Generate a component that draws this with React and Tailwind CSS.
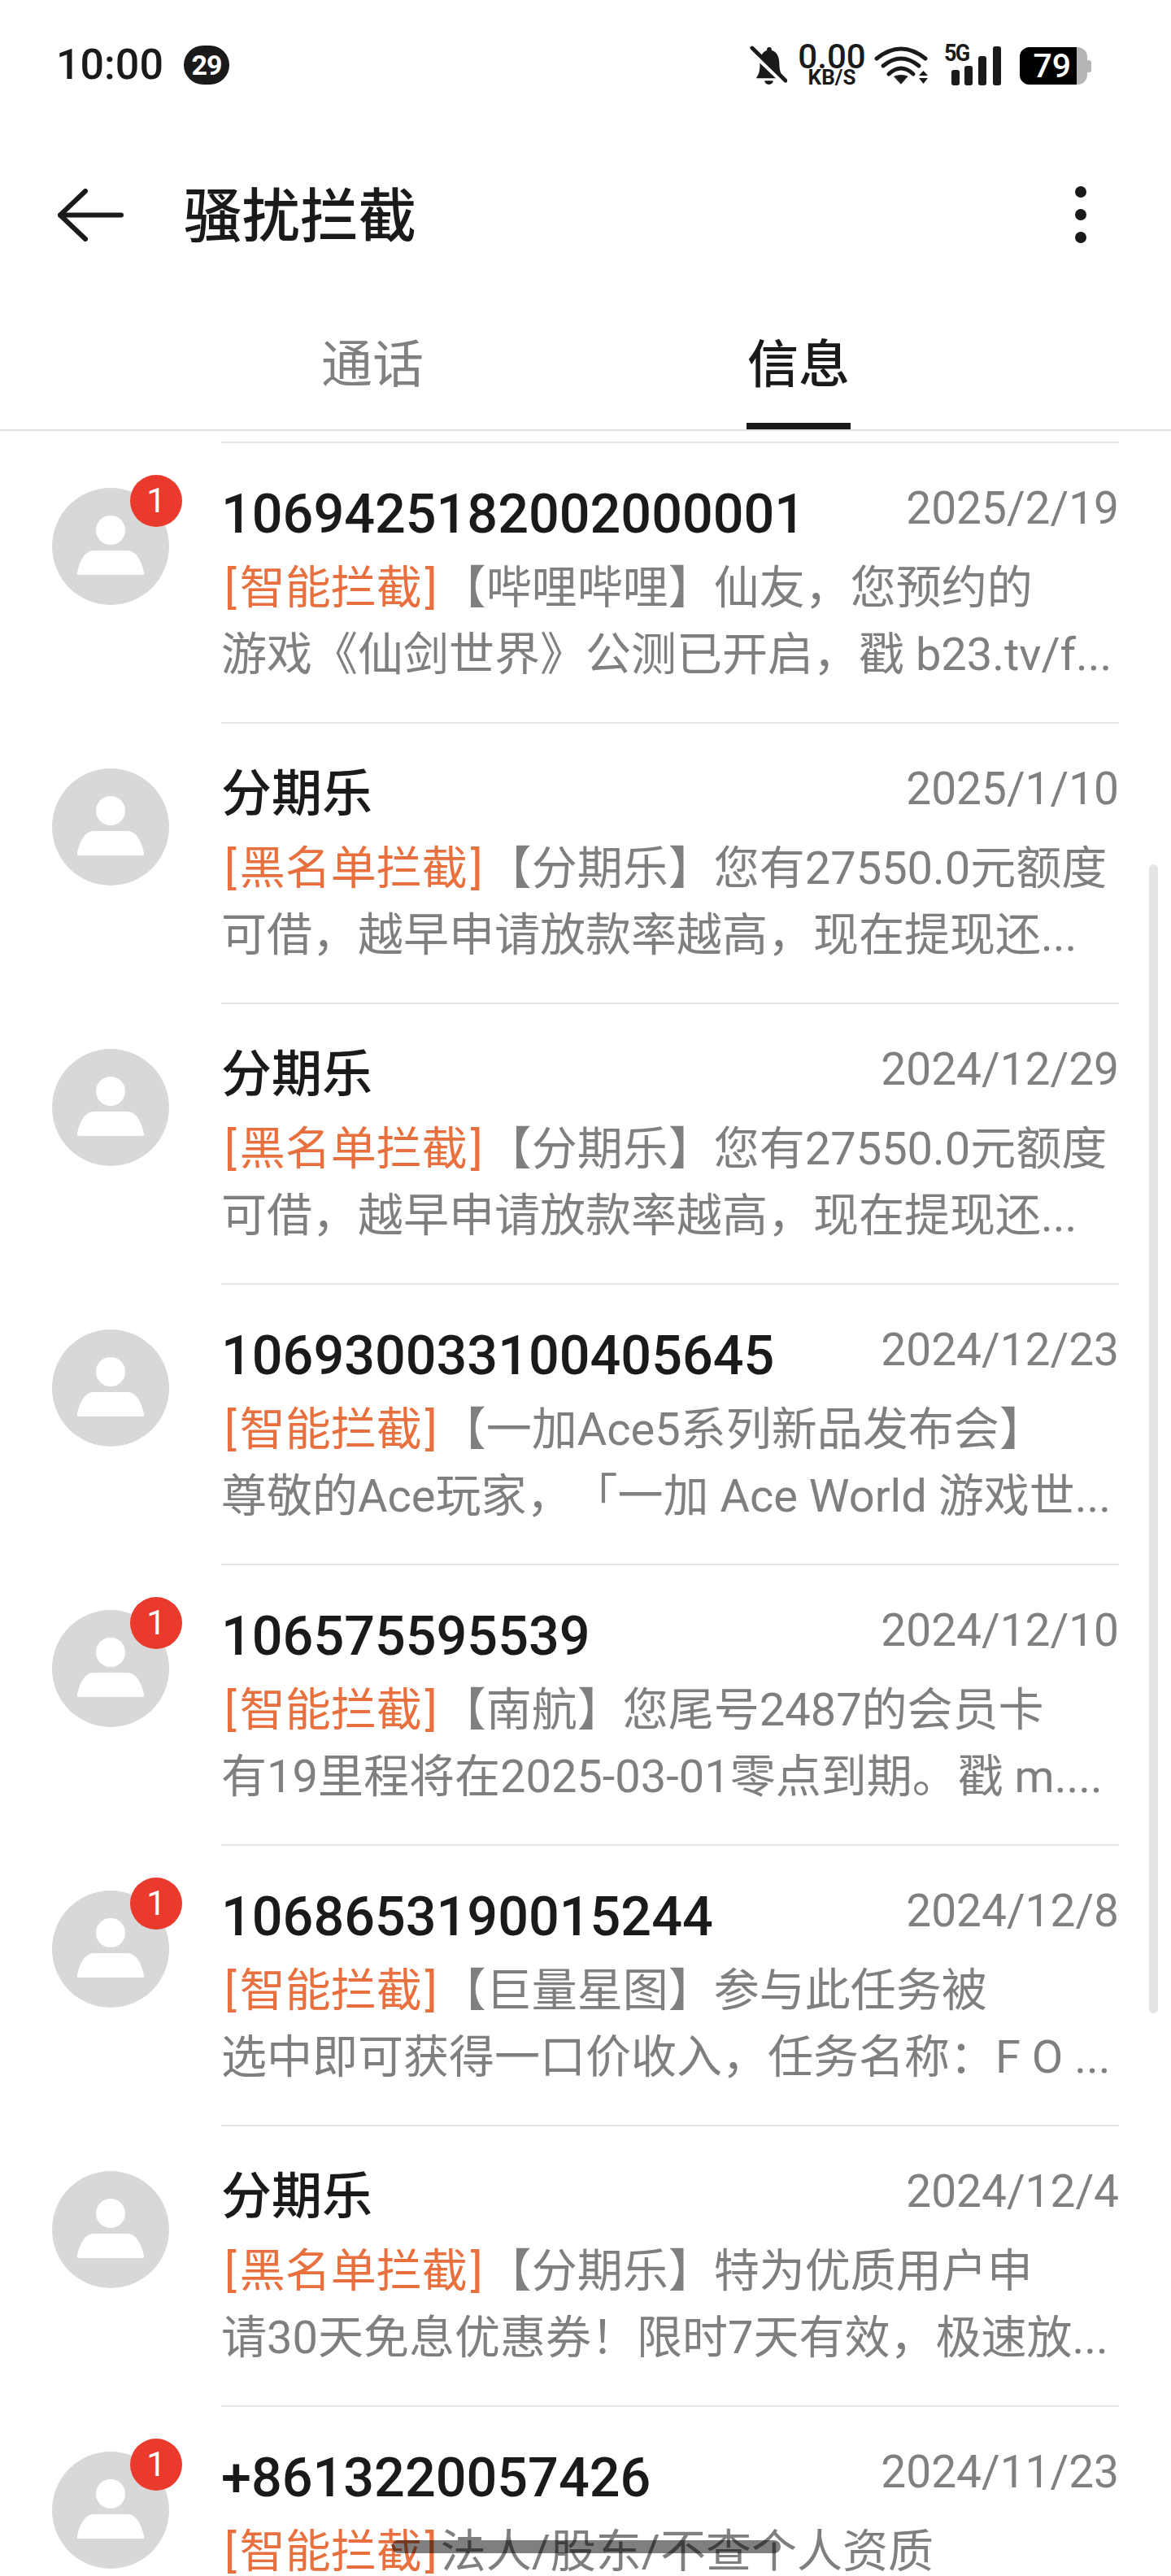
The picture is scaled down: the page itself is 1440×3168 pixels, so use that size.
import React from 'react';

const FONT = "font-['Roboto','Noto_Sans_CJK_SC',sans-serif]";

const rows = [
  { name: '1069425182002000001', date: '2025/2/19', tag: '智能拦截', line1: '【哔哩哔哩】仙友，您预约的', line2: '游戏《仙剑世界》公测已开启，戳 b23.tv/f...', badge: true },
  { name: '分期乐', cjk: true, date: '2025/1/10', tag: '黑名单拦截', line1: '【分期乐】您有27550.0元额度', line2: '可借，越早申请放款率越高，现在提现还...' },
  { name: '分期乐', cjk: true, date: '2024/12/29', tag: '黑名单拦截', line1: '【分期乐】您有27550.0元额度', line2: '可借，越早申请放款率越高，现在提现还...' },
  { name: '106930033100405645', date: '2024/12/23', tag: '智能拦截', line1: '【一加Ace5系列新品发布会】', line2: '尊敬的Ace玩家，「一加 Ace World 游戏世...' },
  { name: '106575595539', date: '2024/12/10', tag: '智能拦截', line1: '【南航】您尾号2487的会员卡', line2: '有19里程将在2025-03-01零点到期。戳 m....', badge: true },
  { name: '1068653190015244', date: '2024/12/8', tag: '智能拦截', line1: '【巨量星图】参与此任务被', line2: '选中即可获得一口价收入，任务名称：F O ...', badge: true },
  { name: '分期乐', cjk: true, date: '2024/12/4', tag: '黑名单拦截', line1: '【分期乐】特为优质用户申', line2: '请30天免息优惠券！限时7天有效，极速放...' },
  { name: '+8613220057426', date: '2024/11/23', tag: '智能拦截', line1: '法人/股东/不查个人资质', line2: '', badge: true },
];

function BellOff() {
  return (
    <svg width="48" height="50" viewBox="0 0 48 50" fill="#1a1a1a">
      <path d="M25 2a3 3 0 0 1 3 3v1C35 8 38 15 38 24C38 32 40 37 44 42H8C12 37 13 32 13 24C13 15 16 8 22 6V5a3 3 0 0 1 3-3Z" />
      <path d="M19 45h11a5.500 5 0 0 1-11 0Z" />
      <path d="M-1 5L44 48" stroke="#fff" strokeWidth="6" />
      <path d="M3 3L46 45" stroke="#1a1a1a" strokeWidth="5" strokeLinecap="round" />
    </svg>
  );
}

function Wifi() {
  return (
    <svg width="68" height="50" viewBox="0 0 68 50" fill="none" stroke="#1a1a1a" strokeWidth="5" strokeLinecap="round">
      <path d="M3 17Q33 -7 63 17" />
      <path d="M11 26Q33 8 55 26" />
      <path d="M18 36Q33 22 48 36" />
      <path d="M25 39Q33 36 41 39L33 48Z" fill="#1a1a1a" stroke="#1a1a1a" strokeWidth="1" strokeLinejoin="round" />
      <path d="M55 38H66L60.500 32Z" fill="#1a1a1a" stroke="none" />
      <path d="M55 41H66L60.500 48Z" fill="#1a1a1a" stroke="none" />
    </svg>
  );
}

function Signal() {
  return (
    <div className="relative w-[70px] h-[50px]">
      <span className="absolute left-0 -top-[5px] text-[30px] leading-[30px] font-bold tracking-[-2px] text-[#1a1a1a] scale-x-90 origin-left">5G</span>
      <svg width="70" height="50" viewBox="0 0 70 50" fill="#1a1a1a">
        <rect x="9" y="31" width="10" height="19" rx="3" />
        <rect x="25" y="26" width="10" height="24" rx="3" />
        <rect x="42" y="14" width="10" height="36" rx="3" />
        <rect x="60" y="2" width="10" height="48" rx="3" />
      </svg>
    </div>
  );
}

function Battery() {
  return (
    <div className="flex items-center">
      <div className="w-[83px] h-[46px] rounded-[12px] overflow-hidden bg-[#b5b5b5]">
        <div className="w-[70px] h-full bg-black text-white text-[41px] leading-[46px] font-medium text-right pr-[7px]">79</div>
      </div>
      <div className="w-[5px] h-[15px] rounded-r-[3px] bg-[#b5b5b5]" />
    </div>
  );
}

function StatusBar() {
  return (
    <div className="h-[204px] flex items-start justify-between pl-[69px] pr-[98px] pt-[55px]">
      <div className="flex items-center h-[50px] gap-[25px]">
        <span className="text-[52px] leading-[50px] font-medium text-[#1a1a1a]">10:00</span>
        <span className="w-[56px] h-[48px] rounded-[24px] bg-[#1a1a1a] text-white text-[34px] leading-[48px] font-bold text-center tracking-[-1px]">29</span>
      </div>
      <div className="flex items-start w-[420px]">
        <BellOff />
        <div className="w-[80px] ml-[15px] flex flex-col items-center text-[#1a1a1a]">
          <span className="text-[42px] leading-[30px] font-medium">0.00</span>
          <span className="text-[26px] leading-[18px] font-bold mt-[1px]">KB/S</span>
        </div>
        <div className="ml-[12px]"><Wifi /></div>
        <div className="ml-[18px]"><Signal /></div>
        <div className="ml-[23px] mt-[3px]"><Battery /></div>
      </div>
    </div>
  );
}

function TitleBar() {
  return (
    <div className="h-[120px] flex items-center justify-between pl-[71px] pr-[104px]">
      <div className="flex items-center">
        <svg width="81" height="65" viewBox="0 0 81 65" fill="none" stroke="#1a1a1a" strokeWidth="6" strokeLinecap="round" strokeLinejoin="round">
          <path d="M34 3L3 32.500L34 62" />
          <path d="M3 32.500H78" />
        </svg>
        <h1 className="ml-[74px] pt-[5px] text-[71.500px] leading-[90px] font-medium text-[#1a1a1a]">骚扰拦截</h1>
      </div>
      <div className="flex flex-col gap-[14px]">
        <span className="w-[14px] h-[14px] rounded-full bg-[#1a1a1a]" />
        <span className="w-[14px] h-[14px] rounded-full bg-[#1a1a1a]" />
        <span className="w-[14px] h-[14px] rounded-full bg-[#1a1a1a]" />
      </div>
    </div>
  );
}

function Tabs() {
  return (
    <div className="h-[206px] border-b-2 border-[#e2e2e2] px-[196px] grid grid-cols-2">
      <div className="flex flex-col items-center pt-[80px]">
        <span className="text-[63px] leading-[90px] text-[#808080]">通话</span>
      </div>
      <div className="flex flex-col items-center pt-[80px]">
        <span className="text-[63px] leading-[90px] font-medium text-[#1a1a1a]">信息</span>
        <span className="w-[128px] h-[8px] mt-[26px] bg-[#1a1a1a]" />
      </div>
    </div>
  );
}

function Avatar({ badge }) {
  return (
    <div className="relative w-[144px] h-[144px] rounded-full bg-[#d8d8d8]">
      <svg className="w-full h-full" viewBox="0 0 144 144" fill="#fff">
        <circle cx="72" cy="52" r="18" />
        <path d="M52 77H92C104 77 110 90 113 104Q114 107 111 107H33Q30 107 31 104C34 90 40 77 52 77Z" />
      </svg>
      {badge && (
        <span className="absolute left-[96px] -top-[16px] w-[64px] h-[64px] rounded-full bg-[#ea3a2e] text-white text-[42px] leading-[64px] text-center">1</span>
      )}
    </div>
  );
}

function Row({ row }) {
  return (
    <div className="flex h-[345px]">
      <div className="w-[272px] shrink-0 pl-[64px] pt-[57px]">
        <Avatar badge={row.badge} />
      </div>
      <div className="flex-1 mr-[64px] border-t-2 border-[#e6e6e6] pt-[47px]">
        <div className="flex items-start justify-between h-[80px]">
          <span className={`${row.cjk ? 'text-[62px]' : 'text-[66.500px]'} leading-[80px] font-medium text-[#1a1a1a] whitespace-nowrap`}>{row.name}</span>
          <span className="-mt-[2px] text-[55px] leading-[70px] text-[#808080] whitespace-nowrap">{row.date}</span>
        </div>
        <div className="mt-[10px] text-[56px] leading-[82px] text-[#7f7f7f] whitespace-nowrap [text-spacing-trim:space-all]">
          <div>
            <span className="text-[#e8703f]">
              <span className="px-[4px]">[</span>{row.tag}<span className="px-[4px]">]</span>
            </span>
            {row.line1}
          </div>
          <div>{row.line2}</div>
        </div>
      </div>
    </div>
  );
}

export default function App() {
  return (
    <div className={`relative h-[3168px] overflow-hidden bg-white ${FONT}`}>
      <StatusBar />
      <TitleBar />
      <Tabs />
      <div className="mt-[13px]">
        {rows.map((row, i) => <Row key={i} row={row} />)}
      </div>
      {/* scrollbar */}
      <div className="absolute left-[1413px] top-[1063px] w-[11px] h-[1413px] rounded-full bg-[#e4e4e4]" />
      {/* gesture bar */}
      <div className="absolute left-[482px] top-[3124px] w-[478px] h-[16px] rounded-full bg-black/50" />
    </div>
  );
}
